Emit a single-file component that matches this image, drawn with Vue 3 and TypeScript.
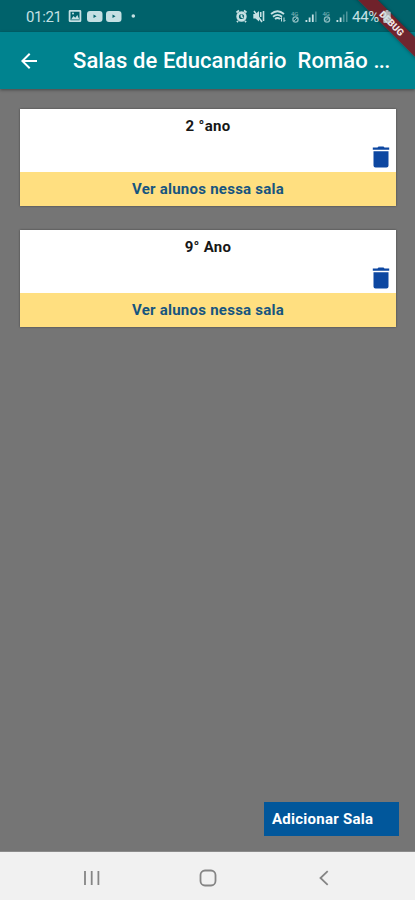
<script setup lang="ts">
interface Room {
  id: number
  name: string
}

const rooms: Room[] = [
  { id: 1, name: '2 °ano' },
  { id: 2, name: '9° Ano' },
]
</script>

<template>
  <div class="screen">
    <header class="status">
      <span class="clock">01:21</span>
      <svg class="notices" width="72" height="16" viewBox="67 8 72 16">
        <path fill-rule="evenodd" d="M70 10h10q1.300 0 1.300 1.300v9.400q0 1.300-1.300 1.300h-10q-1.300 0-1.300-1.300v-9.400q0-1.300 1.300-1.300zM70.500 11.700v8.600h9v-8.600zM71 19.500l2.500-3.500 1.800 1.800 2-2.800 2 4.500z" />
        <circle cx="73" cy="13.600" r="1" />
        <path fill-rule="evenodd" d="M90 11h9.500q3 0 3 3v5q0 3-3 3H90q-3 0-3-3v-5q0-3 3-3zM93.500 14.500v3.600l3-1.800z" />
        <path fill-rule="evenodd" d="M109 11h9.500q3 0 3 3v5q0 3-3 3H109q-3 0-3-3v-5q0-3 3-3zM112.500 14.500v3.600l3-1.800z" />
        <circle cx="133.300" cy="16" r="1.800" />
      </svg>
      <svg class="signals" width="114" height="18" viewBox="235 7 114 18">
        <g fill="none" stroke="currentColor">
          <circle cx="241.500" cy="16.500" r="3.900" stroke-width="2.600" />
          <path d="M236.500 12.500l2.500-2M244 10.500l2.500 2M241.500 14.500v2.300l1.700 1M238 21l-1 1.200M245 21l1 1.200" stroke-width="1.800" />
          <path d="M254 11l8 11M263.500 11v10M260.700 12v5" stroke-width="1.600" />
          <path d="M271 14q6.500-5.500 13 0M273 16.700q4.500-3.700 9 0M275 19q2.500-2 5 0" stroke-width="1.800" />
          <path d="M281.500 21.500v-4l-1.300 1.400M284 17.500v4l1.300-1.400" stroke-width="1" />
          <g opacity=".7">
            <circle cx="295.500" cy="19.500" r="2.600" stroke-width="1.300" />
            <path d="M293.700 21.300l3.600-3.600" />
            <circle cx="327" cy="19.500" r="2.600" stroke-width="1.300" />
            <path d="M325.200 21.300l3.600-3.600" />
          </g>
        </g>
        <path d="M253.300 14h2.200l3.500-3v10.500l-3.500-3h-2.200z" />
        <g class="network">
          <text x="291" y="15.500">4G</text>
          <text x="322.500" y="15.500">4G</text>
        </g>
        <path d="M305.500 20h1.800v2h-1.800zM308.700 17.500h1.800V22h-1.800zM311.900 14.500h1.800V22h-1.800zM336.500 20h1.800v2h-1.800zM339.700 17.500h1.800V22h-1.800z" />
        <path opacity=".4" d="M315.100 11.500h1.500V22h-1.500zM342.900 14.500h1.600V22h-1.600zM346 11.500h1.500V22h-1.500z" />
      </svg>
      <span class="percent">44%</span>
      <svg class="battery" width="8" height="13" viewBox="0 0 8 14"><path d="M2.500 0h3v1.500H7q1 0 1 1V13q0 1-1 1H1q-1 0-1-1V2.500q0-1 1-1h1.500z" /></svg>
    </header>

    <div class="appbar">
      <svg class="back" width="24" height="24" viewBox="0 0 24 24"><path d="M20 11H7.830l5.590-5.590L12 4l-8 8 8 8 1.410-1.410L7.830 13H20z" /></svg>
      <h1>Salas de Educandário&nbsp; Romão <span class="dots">...</span></h1>
    </div>

    <main>
      <article v-for="room in rooms" :key="room.id" class="card">
        <div class="info">
          <h2>{{ room.name }}</h2>
          <svg class="trash" width="18" height="22" viewBox="0 0 18 22"><path d="M1.500 5.200h15v14.300q0 2-2 2h-11q-2 0-2-2zM.8 1.500h4.700l1-1h5l1 1h4.700v2.300H.8z" /></svg>
        </div>
        <button class="students">Ver alunos nessa sala</button>
      </article>
      <button class="add">Adicionar Sala</button>
    </main>

    <nav>
      <svg width="18" height="18" viewBox="0 0 18 18"><path d="M2 2v14M8.700 2v14M15.400 2v14" /></svg>
      <svg width="18" height="18" viewBox="0 0 18 18"><rect x="1.500" y="1.500" width="15" height="15" rx="4.500" /></svg>
      <svg width="18" height="18" viewBox="0 0 18 18"><path d="M12.700 2.200L5.500 9l7.200 6.800" /></svg>
    </nav>

    <div class="ribbon"><span>DEBUG</span></div>
  </div>
</template>

<style>
body {
  background: #757575;
}
</style>

<style scoped>
.screen {
  position: relative;
  display: flex;
  flex-direction: column;
  width: 415px;
  height: 900px;
  overflow: hidden;
  background: #757575;
  font-family: Roboto, "Liberation Sans", sans-serif;
}
svg {
  display: block;
  flex: none;
  fill: currentColor;
}
button {
  border: 0;
  font-family: inherit;
}
.status {
  display: flex;
  align-items: center;
  height: 32px;
  flex: none;
  background: #00626b;
  color: #c5e0e3;
  padding-left: 26px;
}
.clock {
  width: 41px;
  font-size: 15px;
  line-height: 32px;
  letter-spacing: -0.35px;
  padding-top: 2px;
  box-sizing: border-box;
}
.signals {
  margin-left: 96px;
}
.network {
  font-size: 6px;
  opacity: 0.65;
}
.percent,
.battery {
  position: relative;
  z-index: 2;
}
.percent {
  width: 31px;
  margin-left: 3px;
  font-size: 15px;
  line-height: 32px;
  letter-spacing: -0.3px;
  padding-top: 1px;
  box-sizing: border-box;
}
.battery {
  opacity: 0.75;
}
.appbar {
  position: relative;
  display: flex;
  align-items: center;
  height: 57px;
  flex: none;
  padding-left: 17px;
  background: #00838f;
  color: #fff;
  box-shadow: 0 1px 3px rgba(0, 0, 0, 0.4);
}
h1 {
  margin: 0 0 0 32px;
  font-size: 22px;
  line-height: 30px;
  font-weight: 500;
  letter-spacing: 0.09px;
  white-space: nowrap;
}
.dots {
  letter-spacing: -0.7px;
}
main {
  display: flex;
  flex-direction: column;
  flex: 1;
  gap: 24px;
  padding: 20px 16px 16px 20px;
}
.card {
  width: 376px;
  height: 97px;
  box-shadow: 0 0 2px rgba(0, 0, 0, 0.45);
}
.info {
  display: flex;
  flex-direction: column;
  align-items: flex-end;
  height: 63px;
  background: #fff;
}
h2 {
  width: 100%;
  margin: 8px 0 11px;
  font-size: 15px;
  line-height: 18px;
  font-weight: 700;
  letter-spacing: 0.3px;
  text-align: center;
  color: #171717;
}
.trash {
  margin-right: 6px;
  color: #0d47a1;
}
.students {
  display: block;
  width: 100%;
  height: 34px;
  padding: 0;
  background: #ffdf80;
  color: #17557f;
  font-size: 15px;
  font-weight: 700;
  letter-spacing: 0.25px;
}
.add {
  align-self: flex-end;
  width: 135px;
  height: 34px;
  margin-top: auto;
  padding: 0 0 0 8px;
  background: #01579b;
  color: #fff;
  font-size: 15px;
  font-weight: 700;
  letter-spacing: 0.25px;
  text-align: left;
}
nav {
  display: flex;
  align-items: center;
  justify-content: space-between;
  height: 48px;
  flex: none;
  padding: 3px 82px 0 83px;
  box-sizing: border-box;
  background: #f1f1f1;
  box-shadow: 0 0 1px #fff;
  color: #858585;
}
nav svg {
  fill: none;
  stroke: currentColor;
  stroke-width: 1.8;
}
.ribbon {
  position: absolute;
  left: 331px;
  top: 16px;
  width: 120px;
  height: 13.500px;
  transform: rotate(45deg);
  background: rgba(128, 25, 34, 0.88);
  box-shadow: 0 0 4px rgba(0, 0, 0, 0.4);
  color: #f2e4e4;
  font-size: 9.500px;
  line-height: 13.500px;
  font-weight: 900;
  text-align: center;
}
.ribbon span {
  padding-left: 2px;
}
</style>
